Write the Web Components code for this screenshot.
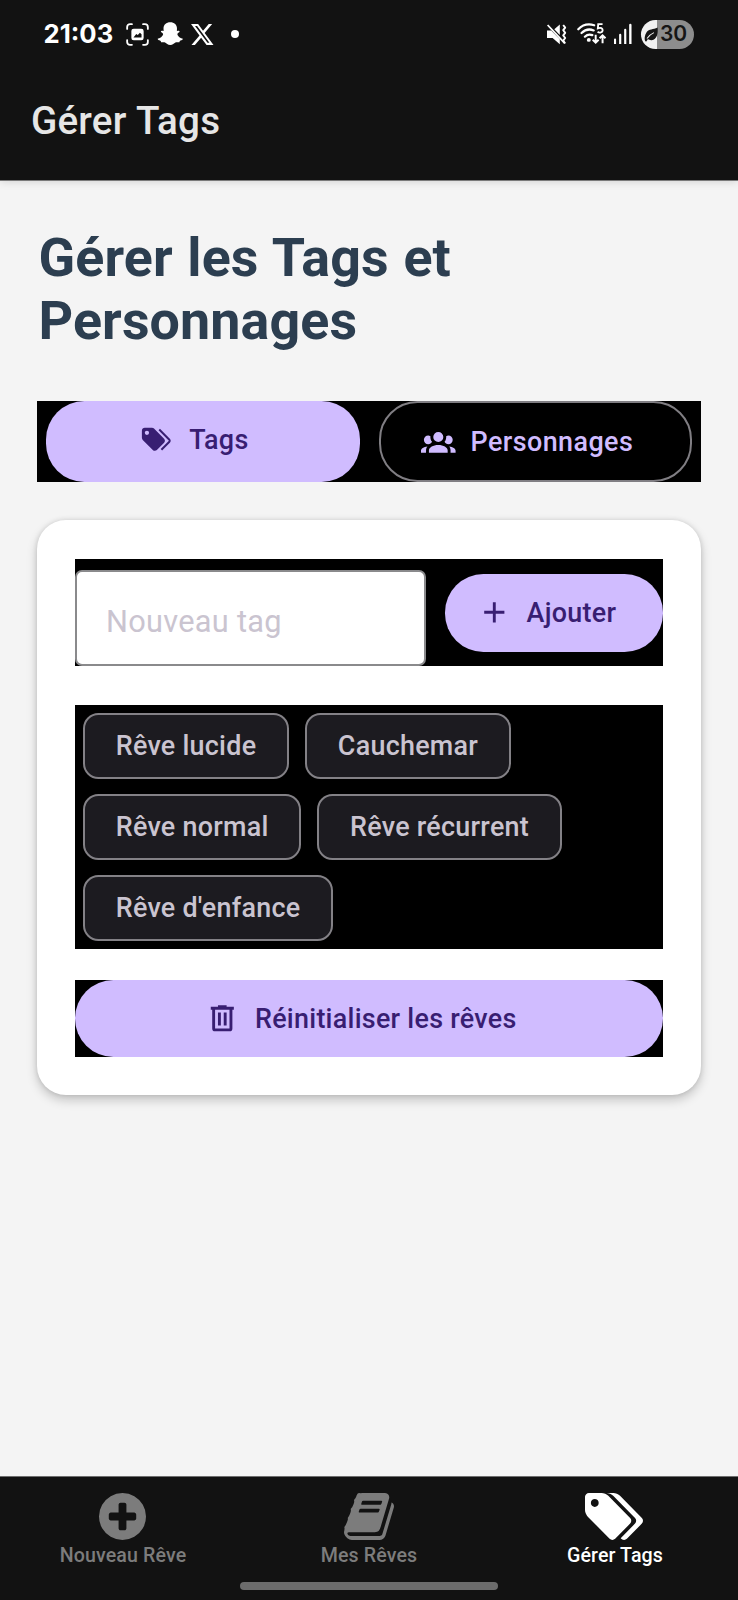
<!DOCTYPE html>
<html lang="fr">
<head>
<meta charset="utf-8">
<title>Gérer Tags</title>
<style>
html, body { margin: 0; padding: 0; }
body { background: #f4f4f4; font-family: Roboto, "Liberation Sans", sans-serif; }
</style>
</head>
<body>
<dream-app></dream-app>
<script>
const define = (name, html, setup) => {
  const template = document.createElement('template');
  template.innerHTML = html;
  customElements.define(name, class extends HTMLElement {
    constructor() {
      super();
      this.attachShadow({ mode: 'open' }).append(template.content.cloneNode(true));
    }
    connectedCallback() { if (setup) setup(this, this.shadowRoot); }
  });
};

/* Icon set: name -> [viewBox, markup] */
const ICONS = {
  tags: ['0 0 24 24', '<path d="M5.5,9A1.5,1.5 0 0,0 7,7.5A1.5,1.5 0 0,0 5.5,6A1.5,1.5 0 0,0 4,7.5A1.5,1.5 0 0,0 5.5,9M17.41,11.58C17.77,11.94 18,12.44 18,13C18,13.55 17.78,14.05 17.41,14.41L12.41,19.41C12.05,19.77 11.55,20 11,20C10.45,20 9.95,19.78 9.58,19.41L2.59,12.42C2.22,12.05 2,11.55 2,11V6C2,4.89 2.89,4 4,4H9C9.55,4 10.05,4.22 10.41,4.58L17.41,11.58M13.54,5.71L14.54,4.71L21.41,11.58C21.78,11.94 22,12.45 22,13C22,13.55 21.78,14.05 21.42,14.41L16.04,19.79L15.04,18.79L20.75,13L13.54,5.71Z"/>'],
  group: ['0 0 24 24', '<path d="M12,5.5A3.5,3.5 0 0,1 15.5,9A3.5,3.5 0 0,1 12,12.5A3.5,3.5 0 0,1 8.5,9A3.5,3.5 0 0,1 12,5.5M5,8C5.56,8 6.08,8.15 6.53,8.42C6.38,9.85 6.8,11.27 7.66,12.38C7.16,13.34 6.16,14 5,14A3,3 0 0,1 2,11A3,3 0 0,1 5,8M19,8A3,3 0 0,1 22,11A3,3 0 0,1 19,14C17.84,14 16.84,13.34 16.34,12.38C17.2,11.27 17.62,9.85 17.47,8.42C17.92,8.15 18.44,8 19,8M5.5,18.25C5.5,16.18 8.41,14.5 12,14.5C15.59,14.5 18.5,16.18 18.5,18.25V20H5.5V18.25M0,20V18.5C0,17.11 1.89,15.94 4.45,15.6C3.86,16.28 3.5,17.22 3.5,18.25V20H0M24,20H20.5V18.25C20.5,17.22 20.14,16.28 19.55,15.6C22.11,15.94 24,17.11 24,18.5V20Z"/>'],
  plus: ['0 0 24 24', '<path d="M19,13H13V19H11V13H5V11H11V5H13V11H19V13Z"/>'],
  trash: ['0 0 24 24', '<path d="M9,3V4H4V6H5V19A2,2 0 0,0 7,21H17A2,2 0 0,0 19,19V6H20V4H15V3H9M7,6H17V19H7V6M9,8V17H11V8H9M13,8V17H15V8H13Z"/>'],
  circleplus: ['128 128 1536 1536', '<path d="M1344 960v-128q0-26-19-45t-45-19h-256v-256q0-26-19-45t-45-19h-128q-26 0-45 19t-19 45v256h-256q-26 0-45 19t-19 45v128q0 26 19 45t45 19h256v256q0 26 19 45t45 19h128q26 0 45-19t19-45v-256h256q26 0 45-19t19-45zm320-64q0 209-103 385.5t-279.5 279.5-385.5 103-385.5-103-279.5-279.5-103-385.5 103-385.5 279.5-279.5 385.5-103 385.5 103 279.5 279.5 103 385.5z"/>'],
  book: ['63 128 1666 1536', '<path d="M1703 478q40 57 18 129l-275 906q-19 64-76.5 107.5t-122.5 43.5h-923q-77 0-148.5-53.5t-99.5-131.5q-24-67-2-127 0-4 3-27t4-37q1-8-3-21.5t-3-19.5q2-11 8-21t16.5-23.5 16.5-23.5q23-38 45-91.5t30-91.5q3-10 .5-30t-.5-28q3-11 17-28t17-23q21-36 42-92t25-90q1-9-2.5-32t.5-28q4-13 22-30.5t22-22.5q19-26 42.5-84.5t27.5-96.5q1-8-3-25.5t-2-26.5q2-8 9-18t18-23 17-21q8-12 16.5-30.5t15-35 16-36 19.5-32 26.5-23.5 36-11.5 47.5 5.5l-1 3q38-9 51-9h761q74 0 114 56t18 130l-274 906q-36 119-71.5 153.5t-128.5 34.5h-869q-27 0-38 15-11 16-1 43 24 70 144 70h923q29 0 56-15.5t35-41.5l300-987q7-22 5-57 38 15 59 43zm-1064 2q-4 13 2 22.5t20 9.5h608q13 0 25.5-9.5t16.5-22.5l21-64q4-13-2-22.5t-20-9.5h-608q-13 0-25.5 9.5t-16.5 22.5zm-83 256q-4 13 2 22.5t20 9.5h608q13 0 25.5-9.5t16.5-22.5l21-64q4-13-2-22.5t-20-9.5h-608q-13 0-25.5 9.5t-16.5 22.5z"/>'],
  bigtags: ['128 128 1899 1515', '<path d="M576 448q0-53-37.5-90.5t-90.5-37.5-90.5 37.5-37.5 90.5 37.5 90.5 90.5 37.5 90.5-37.5 37.5-90.5zm1067 576q0 53-37 90l-491 492q-39 37-91 37-53 0-90-37l-715-716q-38-37-64.5-101t-26.5-117v-416q0-52 38-90t90-38h416q53 0 117 26.5t102 64.5l715 714q37 39 37 91zm384 0q0 53-37 90l-491 492q-39 37-91 37-36 0-59-14t-53-45l470-470q37-37 37-90 0-52-37-91l-715-714q-38-38-102-64.5t-117-26.5h224q53 0 117 26.5t102 64.5l715 714q37 39 37 91z"/>'],
  capture: ['0 0 24 24', '<g fill="none" stroke="currentColor" stroke-width="1.9" stroke-linecap="round"><path d="M1.2 6.2V4.2a3 3 0 0 1 3-3h2M17.8 1.2h2a3 3 0 0 1 3 3v2M22.8 17.8v2a3 3 0 0 1-3 3h-2M6.2 22.8h-2a3 3 0 0 1-3-3v-2"/></g><path fill-rule="evenodd" d="M8 6h8a2.4 2.4 0 0 1 2.4 2.4v7.2A2.4 2.4 0 0 1 16 18H8a2.4 2.4 0 0 1-2.4-2.4V8.400A2.400 2.400 0 0 1 8 6zM7.800 15h8.400v-3.300l-1.700-1.500-2.200 2.400-1.600-1.100z"/>'],
  ghost: ['0 0 24 24', '<path d="M12 .3c3.900 0 6.600 2.500 6.600 6.200 0 .9-.1 1.700-.1 2.400.4.300 1.100-.3 1.800-.1.800.2 1.200.9.500 1.500-.6.500-1.700.9-1.800 1.600-.1 1.300 1.900 3.900 4.800 4.500.5.100.6.500.4.900-.5 1-2.100 1.300-2.800 1.600-.3.300-.2 1.200-.7 1.400-.9.200-2.200-.3-3.600.1-1.500.5-2.600 2.700-5.100 2.700s-3.600-2.200-5.100-2.700c-1.400-.4-2.700.1-3.600-.1-.5-.2-.4-1.100-.7-1.400-.7-.3-2.300-.6-2.800-1.600-.2-.4-.1-.8.4-.9 2.900-.6 4.900-3.200 4.800-4.500-.1-.7-1.200-1.100-1.800-1.600-.7-.6-.3-1.300.5-1.500.7-.2 1.400.4 1.800.1 0-.7-.1-1.500-.1-2.400C5.400 2.800 8.100.3 12 .3z"/>'],
  x: ['1.254 2.25 21.573 19.5', '<path d="M18.244 2.25h3.308l-7.227 8.26 8.502 11.24H16.17l-5.214-6.817L4.99 21.75H1.68l7.73-8.835L1.254 2.25H8.08l4.713 6.231zm-1.161 17.52h1.833L7.084 4.126H5.117z"/>'],
  dot: ['0 0 8 8', '<circle cx="4" cy="4" r="4"/>'],
  mute: ['0 0 21 21', '<path d="M1 6.500h4.200L13.800 15.200v5L6.600 14H1z"/><path d="M13.800.6v10.400L8.300 5.300z"/><path d="M1.600 1l17 18.200" fill="none" stroke="currentColor" stroke-width="1.800"/><path d="M17.200 1l2 2.600-2 2.600 2 2.600-2 2.600 2 2.600-2 2.600 2 2.900" fill="none" stroke="currentColor" stroke-width="1.900" stroke-linejoin="round"/>'],
  wifi: ['0 0 30 22', '<g fill="none" stroke="currentColor" stroke-width="2.300" stroke-linecap="round"><path d="M1.300 6.400C5.500 2 11.500.5 17.500 2.300M4.600 10.300c3.200-3.200 8-4.500 12.400-2.700M8 14c2-2 5-2.600 7.600-1.600"/></g><circle cx="12" cy="17.300" r="2"/><path d="M26 1.200h-4.400l-.4 4.300c3-1.100 4.900 0 4.900 2 0 2.200-2.800 3-5.200 1.600" fill="none" stroke="currentColor" stroke-width="1.900"/><path d="M19 12v8m-3-2.800l3 3 3-3M26 20.600v-7.800m-3 2.800l3-3 3 3" fill="none" stroke="currentColor" stroke-width="2"/>'],
  signal: ['0 0 19 20', '<path d="M0 15.500a1 1 0 0 1 2.200 0V20H0zM5.400 11a1 1 0 0 1 2.300 0v9H5.400zM10.700 6a1 1 0 0 1 2.300 0v14h-2.300zM16 1a1 1 0 0 1 2.500 0v19H16z"/>'],
  leaf: ['0 0 16 16', '<path d="M1.300 15.300C.2 13 .6 8.600 3 5.400 5.600 2.200 10 2.800 15 .6c.6 5.700-.4 13-6.600 13.500-1.800.1-3-.4-4-1.200L2.600 15.400z"/><path d="M3.300 12.200C5.200 9.400 7.600 7.500 11 6" fill="none" stroke="#f2f2f2" stroke-width="1.100"/>']
};

define('app-icon', `<style>
  :host { display: block; flex: none; }
  svg { display: block; width: 100%; height: 100%; fill: currentColor; overflow: visible; }
</style><svg preserveAspectRatio="none"></svg>`, (el, root) => {
  const icon = ICONS[el.getAttribute('name')];
  if (!icon) return;
  const svg = root.querySelector('svg');
  svg.setAttribute('viewBox', icon[0]);
  svg.innerHTML = icon[1];
});

/* Puts an icon named by the host's "icon" attribute at the start of its shadow tree */
const addIcon = (el, root) => {
  const icon = document.createElement('app-icon');
  icon.setAttribute('name', el.getAttribute('icon'));
  if (el.hasAttribute('icon-width')) icon.style.width = el.getAttribute('icon-width') + 'px';
  root.querySelector('span').before(icon);
};

define('status-bar', `<style>
  :host { display: flex; align-items: center; height: 68px; padding-left: 43.500px; color: #fff; box-sizing: border-box; }
  .time { font: 700 25.700px/30px Inter, sans-serif; width: 82px; white-space: nowrap; }
  .capture { width: 23px; height: 23px; margin-top: 1px; }
  .ghost { width: 24.500px; height: 24px; margin-left: 9px; }
  .x { width: 22.500px; height: 21px; margin-left: 8.500px; }
  .dot { width: 8px; height: 8px; margin-left: 18px; }
  .mute { width: 21px; height: 21px; margin-left: 306.500px; }
  .wifi { width: 29.500px; height: 21.500px; margin-left: 10.500px; }
  .signal { width: 18px; height: 20px; margin-left: 7px; }
  .battery { display: flex; align-items: center; box-sizing: border-box; width: 53px; height: 29px; margin-left: 9.500px; padding-left: 3px;
    border-radius: 15px; background: linear-gradient(90deg, #f2f2f2 16px, #8d8d8d 16px); color: #161616; }
  .battery app-icon { width: 14.500px; height: 15px; }
  .battery span { font: 600 21px/27px Inter, sans-serif; margin: -1px 0 0 1.500px; }
</style>
<div class="time">21:03</div>
<app-icon class="capture" name="capture"></app-icon>
<app-icon class="ghost" name="ghost"></app-icon>
<app-icon class="x" name="x"></app-icon>
<app-icon class="dot" name="dot"></app-icon>
<app-icon class="mute" name="mute"></app-icon>
<app-icon class="wifi" name="wifi"></app-icon>
<app-icon class="signal" name="signal"></app-icon>
<div class="battery"><app-icon name="leaf"></app-icon><span>30</span></div>`);

define('app-header', `<style>
  :host { display: block; height: 180px; background: #121212; border-bottom: 1px solid #7a7a7a; box-sizing: content-box;
    box-shadow: 0 1px 8px rgba(0,0,0,.13); }
  h1 { margin: 30px 0 0 31px; font-size: 38.600px; line-height: 45px; font-weight: 500; letter-spacing: .2px; word-spacing: .5px; color: #e6e6e6; white-space: nowrap; }
</style><status-bar></status-bar><h1><slot></slot></h1>`);

define('pill-button', `<style>
  :host { display: flex; box-sizing: border-box; align-items: flex-start; gap: 15.400px; height: 77px; padding: 19.200px 0 0 var(--start, 30px);
    border-radius: 38.400px; background: #d0bcff; color: #381e72; letter-spacing: .28px; }
  :host([outlined]) { background: transparent; color: #d0bcff; border: 2px solid #807e83; letter-spacing: .44px; }
  app-icon { width: 34.600px; height: 34.600px; margin-top: 2px; }
  span { margin-top: 1px; font-size: 26.900px; line-height: 38.400px; font-weight: 500; white-space: nowrap; }
</style><span><slot></slot></span>`, addIcon);

define('tag-chip', `<style>
  :host { display: flex; align-items: center; box-sizing: border-box; height: 65.900px; padding: 0 30.500px 0 31px; border: 2px solid #838186;
    border-radius: 15.400px; background: #1c1b20; color: #cac4d0; font-size: 26.900px; font-weight: 500; letter-spacing: .27px; white-space: nowrap; }
</style><slot></slot>`);

define('text-field', `<style>
  :host { display: flex; align-items: center; box-sizing: border-box; width: 351px; height: 96px; padding: 5.500px 0 0 29px;
    border: 2px solid #8a8a8c; border-radius: 7px; background: #fff; color: #cac4d0; font-size: 30.750px; letter-spacing: .27px; white-space: nowrap; }
</style><slot></slot>`);

define('tag-card', `<style>
  :host { display: block; box-sizing: border-box; width: 664px; height: 575px; margin-top: 38px; padding: 38.600px 38px 0; border-radius: 29px; background: #fff;
    box-shadow: 0 5px 11px rgba(0,0,0,.2), 0 0 5px rgba(0,0,0,.12); }
  .add { display: flex; justify-content: space-between; box-sizing: border-box; height: 107.700px; padding-top: 11.700px; background: #000; }
  .add pill-button { width: 218px; height: 78px; margin-top: 3.500px; padding-top: 18.700px; --start: 31.600px; }
  .chips { display: flex; flex-wrap: wrap; align-content: flex-start; gap: 15.400px 16px; box-sizing: border-box; height: 244px; margin-top: 38.700px; padding: 7.700px; background: #000; }
  .reset { margin-top: 31px; background: #000; }
  .reset pill-button { --start: 130px; }
</style>
<div class="add"><text-field>Nouveau tag</text-field><pill-button icon="plus">Ajouter</pill-button></div>
<div class="chips"><tag-chip>Rêve lucide</tag-chip><tag-chip>Cauchemar</tag-chip><tag-chip>Rêve normal</tag-chip><tag-chip>Rêve récurrent</tag-chip><tag-chip>Rêve d'enfance</tag-chip></div>
<div class="reset"><pill-button icon="trash">Réinitialiser les rêves</pill-button></div>`);

define('segment-row', `<style>
  :host { display: grid; grid-template-columns: 313.500px 313px; padding-left: 9px; gap: 19px; box-sizing: border-box; width: 664px; height: 81.500px; background: #000; }
  pill-button { height: 81.500px; --start: 93.200px; }
  pill-button[outlined] { --start: 40px; }
</style><pill-button icon="tags">Tags</pill-button><pill-button icon="group" outlined>Personnages</pill-button>`);

define('tab-item', `<style>
  :host { display: flex; flex: 1; flex-direction: column; align-items: center; color: #7c7c7c; }
  :host([active]) { color: #fff; }
  app-icon { height: 47px; margin: 16px var(--shift, 0) 0 0; }
  span { margin-top: 4px; font-size: 19.600px; line-height: 23px; font-weight: 500; letter-spacing: .12px; white-space: nowrap; }
</style><span><slot></slot></span>`, addIcon);

define('tab-bar', `<style>
  :host { display: flex; flex-direction: column; box-sizing: border-box; height: 124px; background: #121212; border-top: 1px solid #6e6e6e; }
  .tabs { display: flex; height: 105px; }
  .side { --shift: 2px; }
  .handle { width: 258px; height: 8px; border-radius: 4px; background: #6c6c6c; align-self: center; }
</style>
<div class="tabs">
  <tab-item class="side" icon="circleplus" icon-width="47">Nouveau Rêve</tab-item>
  <tab-item icon="book" icon-width="50">Mes Rêves</tab-item>
  <tab-item class="side" icon="bigtags" icon-width="58" active>Gérer Tags</tab-item>
</div>
<div class="handle"></div>`);

define('dream-app', `<style>
  :host { display: flex; flex-direction: column; width: 738px; height: 1600px; background: #f4f4f4; overflow: hidden; }
  main { flex: 1; padding: 46px 37px 0; }
  h2 { margin: 0 0 48px 1.500px; width: 600px; font-size: 53.800px; line-height: 62.800px; font-weight: 700; letter-spacing: .1px; word-spacing: 1.200px; color: #2c3e50; }
</style>
<app-header>Gérer Tags</app-header>
<main>
  <h2>Gérer les Tags et Personnages</h2>
  <segment-row></segment-row>
  <tag-card></tag-card>
</main>
<tab-bar></tab-bar>`);
</script>
</body>
</html>
